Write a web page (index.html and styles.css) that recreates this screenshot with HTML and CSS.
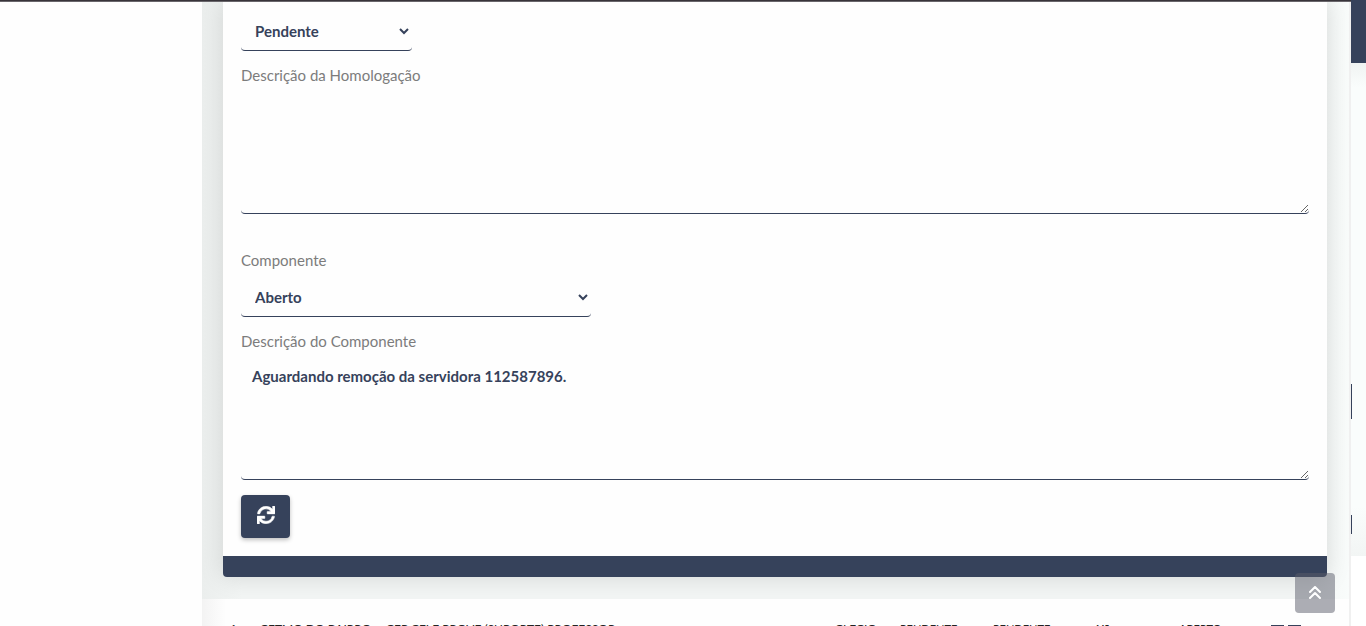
FILE: index.html
```html
<!DOCTYPE html>
<html lang="pt-BR">
<head>
<meta charset="utf-8">
<title>Homologação</title>
<link rel="stylesheet" href="styles.css">
</head>
<body>
<div class="page">
  <aside class="sidebar"></aside>
  <main class="content">
    <form class="card">
      <div class="card-body">
        <select class="field select-short" aria-label="Homologação"><option>Pendente</option></select>
        <label class="label" for="desc-h">Descrição da Homologação</label>
        <textarea class="field area area-first" id="desc-h"></textarea>
        <label class="label label-select" for="comp">Componente</label>
        <select class="field select-long" id="comp"><option>Aberto</option></select>
        <label class="label" for="desc-c">Descrição do Componente</label>
        <textarea class="field area" id="desc-c">Aguardando remoção da servidora 112587896.</textarea>
        <button class="refresh" type="button" aria-label="Atualizar">
          <svg viewBox="0 0 512 512" width="18" height="18"><path fill="currentColor" stroke="currentColor" stroke-width="14" d="M440.65 12.57l4 82.77A247.16 247.16 0 0 0 255.83 8C134.73 8 33.91 94.92 12.29 209.82A12 12 0 0 0 24.09 224h49.05a12 12 0 0 0 11.67-9.26 175.91 175.91 0 0 1 317-56.94l-101.46-4.86a12 12 0 0 0-12.57 12v47.41a12 12 0 0 0 12 12H500a12 12 0 0 0 12-12V12a12 12 0 0 0-12-12h-47.37a12 12 0 0 0-11.98 12.57zM255.83 432a175.61 175.61 0 0 1-146-77.8l101.8 4.87a12 12 0 0 0 12.57-12v-47.4a12 12 0 0 0-12-12H12a12 12 0 0 0-12 12V500a12 12 0 0 0 12 12h47.35a12 12 0 0 0 12-12.6l-4.15-82.57A247.17 247.17 0 0 0 255.83 504c121.11 0 221.93-86.92 243.55-201.82a12 12 0 0 0-11.8-14.18h-49.05a12 12 0 0 0-11.67 9.26A175.86 175.86 0 0 1 255.83 432z"/></svg>
        </button>
      </div>
      <div class="card-footer"></div>
    </form>
    <div class="list">
      <div class="row">
        <span>1</span><span>CETMO DO BAIRRO</span><span>CEP CEI E PROVE (SUPORTE) PROFESSOR</span><span>CLECIO</span><span class="status">PENDENTE</span><span class="status">PENDENTE</span><b class="status">Não</b><span class="status">ABERTO</span><span class="actions"><i></i><i></i></span>
      </div>
    </div>
  </main>
  <div class="gutter"></div>
  <div class="behind">
    <div class="behind-head"></div>
    <div class="behind-body"><div class="mark mark-tall"></div><div class="mark"></div></div>
    <div class="behind-foot"></div>
  </div>
</div>
<div class="topline"></div>
<a class="to-top" href="#" aria-label="Voltar ao topo">
  <svg viewBox="0 0 14 14" width="14" height="14" fill="none" stroke="currentColor" stroke-width="2" stroke-linecap="round" stroke-linejoin="round"><path d="M2 6l5-5 5 5M2 12l5-5 5 5"/></svg>
</a>
</body>
</html>
```
FILE: styles.css
```css
* { box-sizing: border-box; }
body {
  margin: 0;
  background: #fff;
  color: #36425b;
  font: 15px/20px Lato, "Noto Sans", sans-serif;
}
.page {
  display: grid;
  grid-template-columns: 202px 1fr 2px 15px;
  height: 100vh;
  overflow: hidden;
}
.sidebar { background: #fefefe; }
.content {
  min-width: 0;
  overflow: hidden;
  background: linear-gradient(90deg, #ebeeed, #f2f5f4 40px, #f2f5f4 calc(100% - 40px), #f9fcfb);
}
.card {
  margin: 0 22px 22px 21px;
  border-radius: 0 0 4px 4px;
  box-shadow: 0 0 24px rgba(0, 0, 0, .13);
}
.card-body {
  display: flex;
  flex-direction: column;
  align-items: flex-start;
  padding: 12px 18px 18px;
  background: #fefefe;
}
.card-footer {
  height: 21px;
  background: #36425b;
  border-radius: 0 0 4px 4px;
}
.field {
  border: 0 solid #36425b;
  border-bottom-width: 1px;
  border-radius: 4px;
  background: transparent;
  color: #36425b;
  font: bold 15px/20px Lato, "Noto Sans", sans-serif;
}
.select-short, .select-long {
  height: 39px;
  margin-bottom: 14px;
  padding: 0 1px 1px 10px;
}
.select-short { width: 171px; }
.select-long { width: 350px; }
.label {
  margin-bottom: 5px;
  color: #7c7c7c;
}
.label-select { margin-bottom: 8px; }
.area {
  width: 100%;
  height: 124px;
  padding: 10px 11px;
  margin-bottom: 15px;
  resize: vertical;
}
.area-first { margin-bottom: 36px; }
.refresh {
  display: grid;
  place-items: center;
  width: 49px;
  height: 43px;
  padding: 0 0 3px;
  border: 0;
  border-radius: 4px;
  background: #36425b;
  color: #fff;
  box-shadow: 0 2px 4px rgba(0, 0, 0, .25);
}
.list {
  height: 100px;
  padding: 22px 20px 0 28px;
  background: linear-gradient(90deg, #f3f3f3, #fefefe 24px);
}
.row {
  display: grid;
  grid-template-columns: 30px 126px 1fr 65px 93px 103px 83px 92px 58px;
  color: #222;
  font-size: 12px;
  line-height: 16px;
  white-space: nowrap;
}
.status { font-size: 11px; }
.actions { display: flex; gap: 4px; padding-top: 4px; }
.actions i { width: 13px; height: 14px; background: #36425b; }
.gutter { background: #f0f0f0; }
.behind {
  display: flex;
  flex-direction: column;
}
.behind-head { flex: 0 0 63px; background: #36425b; }
.behind-body {
  flex: 0 0 493px;
  padding-top: 321px;
  background: linear-gradient(#f0f3f2, #fafdfc 24px, #fafdfc 90%, #f2f5f4);
}
.mark { width: 1px; height: 19px; background: #36425b; }
.mark-tall { height: 35px; margin-bottom: 96px; }
.behind-foot { flex: 1; background: #fff; }
.topline {
  position: absolute;
  top: 0;
  left: 0;
  right: 15px;
  height: 2px;
  background: linear-gradient(#38343a 50%, #69666b 50%);
}
.to-top {
  position: fixed;
  right: 31px;
  bottom: 13px;
  display: grid;
  place-items: center;
  width: 40px;
  height: 40px;
  border-radius: 4px;
  background: rgba(90, 92, 105, .5);
  color: #fff;
}
```
